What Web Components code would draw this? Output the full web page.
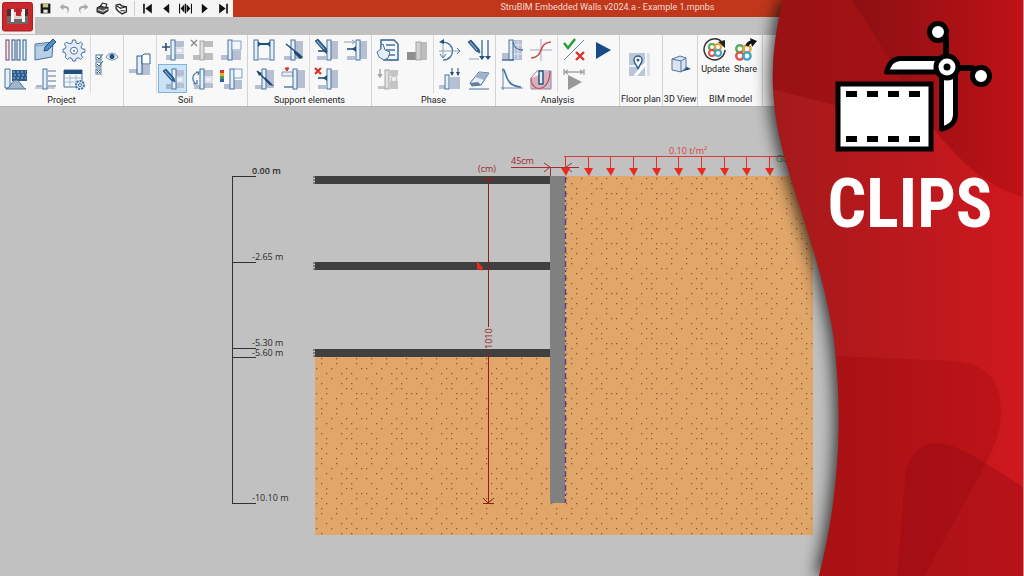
<!DOCTYPE html>
<html lang="en">
<head>
<meta charset="utf-8">
<meta name="viewport" content="width=device-width, initial-scale=1">
<title>StruBIM Embedded Walls v2024.a - Example 1.mpnbs</title>
<style>
  body { margin: 0; font-family: Roboto, "Noto Sans", sans-serif; background: #c1c1c1; }
</style>
</head>
<body>
<clip-page></clip-page>

<script>
/* ---------- icon set, 24 x 24 ---------- */
const pile = (x, y = 2, h = 20) => `<rect x="${x}" y="${y}" width="4" height="${h}" fill="#e6eef7" stroke="#45739d"/>`;
const soil = (x = 14, y = 3) => `<path d="M${x} ${y}h8v18h-8z" fill="#b7bfd2"/>`;
const base = '<path d="M2 17h8v5H2z" fill="#b7bfd2"/>';
const layers = '<path d="M14 3h9v6h-9zM14 16h9v5h-9z" fill="#b7bfd2"/><path d="M15 10h7v5h-7z" fill="#eef2f8" stroke="#c3cbdc"/>';
const pencil = (x, y, c = '#2f6396') => `<path d="M${x} ${y}l3-2 8 9 1 4-4-2z" fill="${c}" stroke="#234f7c" stroke-width=".8"/><path d="M${x + 2} ${y}l7 8" stroke="#a9c6e2"/>`;
const swirl = '<g fill="none" stroke-width="2"><circle cx="9" cy="9" r="3" stroke="#4fae55"/><circle cx="15" cy="9" r="3" stroke="#e9a13b"/><circle cx="9" cy="15" r="3" stroke="#e0514a"/><circle cx="15" cy="15" r="3" stroke="#3fa4c8"/></g>';

const ICONS = {
  walls: '<g fill="#e9eff7" stroke-width="1.2"><rect x="2" y="2" width="3" height="20" stroke="#8e5878"/><rect x="8" y="2" width="3" height="20" stroke="#4a6a94"/><rect x="13" y="2" width="3" height="20" stroke="#4a6a94"/><rect x="19" y="2" width="3" height="20" stroke="#3f78a5"/></g>',
  describe: '<path d="M2 6l18-2-1 15-17 3z" fill="#b9cfe6" stroke="#45739d"/><path d="M2 6l2 2 15-2" fill="none" stroke="#7fa0c0"/><path d="M11 13l1-4 8-8 3 3-8 8z" fill="#4f8dc0" stroke="#234f7c"/>',
  gear: '<path d="M10.500 2h3l.6 3 2 .8 2.500-1.700 2.100 2.100L19 8.700l.8 2 3 .5v3l-3 .6-.8 2 1.700 2.500-2.100 2.100-2.500-1.700-2 .8-.6 2.500h-3l-.6-2.500-2-.8-2.500 1.700-2.100-2.100L4 16.800l-.8-2-2.200-.6v-3l2.200-.5.8-2-1.700-2.500 2.100-2.100L7.900 5.800l2-.8z" fill="#e3ecf6" stroke="#45739d"/><circle cx="12" cy="12.700" r="3.500" fill="#fff" stroke="#45739d"/><circle cx="12" cy="12.700" r="1" fill="#45739d"/>',
  terrain: '<path d="M8 3h15v11H8z" fill="#2d5c8c"/><path d="M9 5h13M10 8h13M9 11h13" stroke="#a3c0dc" stroke-dasharray="2 2"/><path d="M1 2h5v19H1z" fill="#e6eef7" stroke="#45739d"/><path d="M2 22c4-1 6-9 10-9s6 8 10 9z" fill="#a4b4cd" stroke="#45739d"/>',
  strata: '<path d="M15 4h8M15 9h8M15 14h8M15 19h8M3 19h6" stroke="#aab6ca" stroke-width="2"/><path d="M2 21h20" stroke="#c3cbdc" stroke-width="2"/>' + pile(10),
  tableGear: '<path d="M2 3h18v17H2z" fill="#f3f7fb" stroke="#45739d"/><path d="M2 3h18v4H2z" fill="#234f7c"/><path d="M3 11h16M3 15h16M8 8v11M14 8v11" stroke="#a4bad0"/><circle cx="18" cy="18" r="4" fill="#dbe8f5" stroke="#45739d" stroke-width="2" stroke-dasharray="2 1"/><circle cx="18" cy="18" r="1.500" fill="#fff" stroke="#45739d"/>',
  visible: '<g fill="#fff" stroke="#4c7094"><rect x="1" y="3" width="5" height="5"/><rect x="1" y="10" width="5" height="5"/><rect x="1" y="17" width="5" height="5"/></g><path d="M2 5l2 2 4-5M2 12l2 2 4-5M2 18l3 3M5 18l-3 3" fill="none" stroke="#2f5f8f"/><path d="M11 5c3-5 9-5 12 0-3 4-9 4-12 0z" fill="#e3ecf6" stroke="#6f8fae"/><circle cx="17" cy="4.500" r="2.500" fill="#234f7c"/>',
  wallShape: '<path d="M1 17h8v4H1zM14 13h8v10h-8z" fill="#b7bfd2"/><rect x="9" y="4" width="5" height="18" fill="#e6eef7" stroke="#2f5f8f"/><path d="M14 4l2-2h6v10h-8z" fill="#fff" stroke="#2f5f8f"/>',
  addLayer: layers + '<path d="M5 17h5v5H5z" fill="#b7bfd2"/>' + pile(10) + '<path d="M5 5v8M1 9h8" stroke="#234f7c" stroke-width="1.600"/>',
  delLayer: '<path d="M14 3h9v6h-9zM14 15h9v7h-9zM3 17h7v5H3z" fill="#bdbdbd"/><rect x="10" y="3" width="4" height="19" fill="#ddd" stroke="#a5a5a5"/><path d="M1 2l6 6M7 2l-6 6" stroke="#888" stroke-width="1.400"/>',
  areaLayer: '<path d="M2 17h8v5H2zM13 13h9v9h-9z" fill="#b7bfd2"/>' + pile(9) + '<path d="M13 3h9v9h-9z" fill="#f2f6fb" stroke="#7fa0c0"/>',
  editLayer: layers + '<path d="M5 17h5v5H5z" fill="#a4b4cd"/>' + pile(11) + pencil(2, 4),
  swapLayer: layers + '<path d="M4 18h6v4H4z" fill="#b7bfd2"/>' + pile(10) + '<path d="M9 5C2 6 1 13 6 17M6 5l3 0-1 3M3 17h4v-4" fill="none" stroke="#45739d" stroke-width="1.200"/>',
  colorLayer: '<path d="M5 17h6v5H5zM14 13h9v9h-9z" fill="#b7bfd2"/><path d="M1 3h4v4H1z" fill="#d8372e"/><path d="M1 6h4v3H1z" fill="#e5b12c"/><path d="M1 9h4v3H1z" fill="#3ba24b"/><path d="M1 12h4v3H1z" fill="#2a5cc2"/>' + pile(11) + '<path d="M15 2h8v9h-8z" fill="#f2f6fb" stroke="#7fa0c0"/>',
  strut: '<g fill="#e6eef7" stroke="#45739d"><rect x="2" y="2" width="4" height="20"/><rect x="18" y="2" width="4" height="20"/></g><path d="M6 6h12" stroke="#234f7c" stroke-width="2"/><path d="M6 3l3 3-3 3zM18 3l-3 3 3 3z" fill="#234f7c"/><path d="M7 21h10" stroke="#b7bfd2" stroke-width="2"/>',
  anchor: soil() + '<path d="M3 18h7v4H3z" fill="#b7bfd2"/>' + pile(10) + '<path d="M5 6l15 12" stroke="#234f7c" stroke-width="1.600"/><path d="M13 12l9 7-3 2-6-6z" fill="#1c4570"/>',
  anchor2: soil() + '<path d="M3 18h7v4H3z" fill="#b7bfd2"/>' + pile(10) + '<path d="M5 4l14 14" stroke="#234f7c" stroke-width="1.600"/><path d="M5 4l5 2-3 3zM13 10l9 9-4-1-5-5z" fill="#1c4570"/>',
  slab: soil(16) + '<path d="M1 7h11M3 20h9" stroke="#8798b2" stroke-width="2"/><path d="M1 5h11v4H1z" fill="#e6eef7" stroke="#8798b2"/>' + pile(12) + '<path d="M6 0v4M4 1l2 3 2-3z" stroke="#d8372e" fill="#d8372e"/>',
  editSupport: soil(17) + pile(13) + '<path d="M4 13h9" stroke="#234f7c" stroke-width="1.600"/><path d="M13 10v6l-4-3z" fill="#234f7c"/><path d="M3 18h9v4H3z" fill="#b7bfd2"/>' + pencil(1, 3),
  moveSupport: soil(17) + pile(13) + '<path d="M1 4h10M9 2l3 2-3 2" fill="none" stroke="#8da1b8"/><path d="M4 11h9" stroke="#234f7c" stroke-width="1.600"/><path d="M13 8v6l-4-3z" fill="#234f7c"/><path d="M4 18h8v4H4z" fill="#b7bfd2"/>',
  delSupport: soil(17) + pile(13) + '<path d="M4 11h9" stroke="#234f7c" stroke-width="1.600"/><path d="M13 8v6l-4-3z" fill="#234f7c"/><path d="M4 18h8v4H4z" fill="#b7bfd2"/><path d="M1 1l6 6M7 1L1 7" stroke="#df2a22" stroke-width="2"/>',
  phases: '<path d="M5 2h13l4 4v16H8l-3-6z" fill="#f4f7fb" stroke="#2f5f8f" stroke-width="1.400"/><path d="M10 7h9M10 12h9M12 17h7" stroke="#45739d" stroke-width="1.500"/><path d="M1 14l4-3V7l2-1 2 6 5 2-2 6-4 2-5-3z" fill="#e6eef7" stroke="#45739d"/>',
  grayWall: '<path d="M2 14h9v8H2z" fill="#8f8f8f"/><path d="M16 4h6v18h-6z" fill="#bdbdbd"/><rect x="11" y="4" width="5" height="18" fill="#d0d0d0" stroke="#a5a5a5"/>',
  grayLoad: '<path d="M4 2v8M2 7l2 3 2-3" fill="none" stroke="#a5a5a5" stroke-width="1.400"/><path d="M14 3h8v6h-8zM14 14h8v8h-8zM2 19h7v3H2z" fill="#c4c4c4"/><rect x="9" y="3" width="4" height="19" fill="#e0e0e0" stroke="#a5a5a5"/><circle cx="18" cy="12" r="3" fill="#eee" stroke="#bbb"/>',
  moment: '<path d="M3 4C18 3 18 22 5 22" fill="none" stroke="#45739d" stroke-width="1.400"/><path d="M5 3v17M1 13h21" stroke="#8da1b8"/><path d="M1 4l5-3v5z" fill="#234f7c"/><path d="M19 10l3 3-3 3M2 16l3 4 3-4" fill="none" stroke="#45739d"/>',
  editLoad: pencil(1, 4) + '<path d="M15 2v18M21 2v18" stroke="#45739d" stroke-width="1.400"/><path d="M12 18h6l-3 4zM18 18h6l-3 4z" fill="#234f7c"/><path d="M2 21h10" stroke="#8da1b8"/>',
  wallLoads: '<path d="M12 10h10v12H12zM1 18h6v4H1z" fill="#b7bfd2"/><rect x="7" y="8" width="4" height="14" fill="#e6eef7" stroke="#45739d"/><path d="M14 1v7M20 1v7" stroke="#234f7c"/><path d="M12 5h4l-2 4zM18 5h4l-2 4z" fill="#234f7c"/>',
  eraser: '<path d="M3 16l9-11 10 1-8 12-9 1z" fill="#e6eef7" stroke="#45739d"/><path d="M3 16l8-1 3 3-9 1z" fill="#6a7f9a"/><path d="M12 5l10 1-5 7-9-3z" fill="#9db2cb"/><path d="M2 22h20" stroke="#45739d"/>',
  wallGraph: '<path d="M12 2h10v20H12zM2 15h7v7H2z" fill="#b7bfd2"/><path d="M14 3v18M18 3v18M12 7h10M12 16h10" stroke="#e2e7f0"/>' + pile(9) + '<path d="M13 4c1 6 4 8 10 8M2 22h12" fill="none" stroke="#45739d" stroke-width="1.400"/>',
  sCurve: '<path d="M12 1v22M1 12h22" stroke="#9dabbf"/><path d="M2 20c14-1 6-15 20-16" fill="none" stroke="#cf4d4c" stroke-width="1.600"/>',
  decay: '<path d="M3 1v22M1 21h22" stroke="#6c88a8"/><path d="M2 3h2l3 8c2 5 5 8 14 9" fill="none" stroke="#45739d" stroke-width="1.600"/>',
  slip: '<path d="M2 13h8V3h12v19H3z" fill="#bcc4d6"/><path d="M2 11c0 15 19 15 19-7" fill="#d9b0bc" stroke="#bf4955" stroke-width="1.200"/><path d="M2 11L9 3M22 4v18H2V12" fill="none" stroke="#a8798c"/><rect x="10" y="4" width="4" height="13" fill="#e6eef7" stroke="#234f7c" stroke-width="1.400"/>',
  check: '<path d="M2 5l4 5 7-9" fill="none" stroke="#27a03a" stroke-width="2.600"/><path d="M2 22L22 2" stroke="#5d82a7"/><path d="M14 14l8 8M22 14l-8 8" stroke="#e0302a" stroke-width="2.400"/>',
  run: '<path d="M5 4l15 8-15 9z" fill="#174a86"/>',
  runGray: '<path d="M2 2v6M22 2v6M3 5h18M6 3L3 5l3 2M18 3l3 2-3 2" fill="none" stroke="#a5a5a5" stroke-width="1.400"/><path d="M6 8l14 7-14 8z" fill="#989898"/>',
  floor: '<path d="M1 1h16v23H1z" fill="#bcc6d6"/><path d="M19 1h3v23h-3z" fill="#dde2ea"/><path d="M1 14h16" stroke="#eceff4" stroke-width="2"/><path d="M7 24l11-13" stroke="#fff" stroke-width="3"/><path d="M10 17c-1-4-4-5-4-9a4 4 0 0 1 8 0c0 4-3 5-4 9z" fill="#f5f8fc" stroke="#2f5f8f" stroke-width="1.400"/><circle cx="10" cy="8" r="1.500" fill="#2f5f8f"/>',
  cube: '<path d="M12 20l11-3-6-3z" fill="#234f7c"/><path d="M4 7l8-3 6 2v10l-5 4-9-2z" fill="#dbe5f1" stroke="#54779d"/><path d="M4 7l9 2 5-3M13 9v11" fill="none" stroke="#54779d"/>',
  update: '<path d="M19 4a10.500 10.500 0 1 0 3 8" fill="none" stroke="#333" stroke-width="1.500"/><path d="M15 4l7-2v8z" fill="#222"/>' + swirl,
  share: '<g transform="translate(-4 0) scale(1.2)">' + swirl + '</g><path d="M14 8c1-3 3-4 5-4" fill="none" stroke="#111" stroke-width="3"/><path d="M17 0l7 3-5 6z" fill="#111"/>',
  save: '<path d="M3 3h18v18H3z" fill="#16170f"/><path d="M7 3h10v7H7z" fill="#c5c78a"/><path d="M8 14h8v6H8z" fill="#e5e5e5"/>',
  undo: '<path d="M10 3L3 9l7 6V11c7-1 10 3 6 11 8-8 5-16-6-15z" fill="#a9a9a9"/>',
  redo: '<path d="M14 3l7 6-7 6V11c-7-1-10 3-6 11-8-8-5-16 6-15z" fill="#a9a9a9"/>',
  print: '<path d="M2 11l7-4 13 3v6l-9 6-11-4z" fill="#555" stroke="#222" stroke-width="2"/><path d="M8 8l4-6 8 2-2 6z" fill="#f5f5f5" stroke="#222" stroke-width="2"/><path d="M4 14l9 3 8-4" fill="none" stroke="#e5e5e5" stroke-width="2"/>',
  hand: '<path d="M2 6l7-2 3 3 9 2v9l-8 4-8-6-3-4z" fill="#f5f5f5" stroke="#2b2b2b" stroke-width="2.500"/><path d="M9 12l10-3M10 16h8M4 8l7 4" stroke="#2b2b2b" stroke-width="2"/>',
  first: '<path d="M4 3h3v18H4zM20 3v18L8 12z" fill="#111"/>',
  prev: '<path d="M17 3v18L6 12z" fill="#111"/>',
  both: '<path d="M0 3h2v18H0zM22 3h2v18h-2zM10 4v16L3 12zM14 4v16l7-8zM11 3h2v18h-2z" fill="#111"/>',
  next: '<path d="M7 3v18l11-9z" fill="#111"/>',
  last: '<path d="M17 3h3v18h-3zM4 3v18l12-9z" fill="#111"/>'
};

class Element extends HTMLElement {
  connectedCallback() {
    if (this.shadowRoot) return;
    this.attachShadow({ mode: 'open' }).innerHTML = this.render();
  }
}

/* ---------- one ribbon or quick-access button ---------- */
customElements.define('tool-button', class extends Element {
  render() {
    const text = this.getAttribute('text');
    return `<style>
      :host { display: block; }
      button { box-sizing: border-box; display: flex; flex-direction: column; align-items: center; justify-content: center;
        width: 100%; height: 29px; margin: 0; padding: 0; border: 1px solid transparent; background: none; font: inherit; color: inherit; }
      svg { width: 24px; height: 24px; flex: none; display: block; }
      :host([small]) button { height: 16px; border: 0; }
      :host([small]) svg { width: 13px; height: 13px; }
      :host([active]) button { background: #cbe3f6; border-color: #7db4de; }
      :host([text]) button { height: auto; justify-content: flex-start; padding-top: 2px; font-size: 9px; line-height: 15px; }
    </style>
    <button type="button" ${text ? '' : `aria-label="${this.getAttribute('label')}"`}><svg viewBox="0 0 24 24" aria-hidden="true">${ICONS[this.getAttribute('icon')]}</svg>${text || ''}</button>`;
  }
});

/* ---------- a block of buttons inside a ribbon group ---------- */
customElements.define('tool-block', class extends Element {
  render() {
    return `<style>
      :host { display: grid; grid-template-columns: repeat(var(--cols, 1), 29px); grid-auto-rows: 29px; align-content: center;
        justify-content: center; padding: 0 2px 0 1px; }
      :host(:not(:last-child)) { border-right: 1px solid #dadada; }
      :host([wide]) { grid-template-columns: 30px 30px; padding: 0 2px; align-content: start; }
    </style><slot></slot>`;
  }
});

customElements.define('ribbon-group', class extends Element {
  render() {
    return `<style>
      :host { display: flex; flex-direction: column; flex: none; border-right: 1px solid #d2d2d2; color: #222; }
      .tools { display: flex; height: 58px; justify-content: center; }
      h2 { margin: 0; padding: 0 1px; font-size: 9px; line-height: 14px; font-weight: 400; text-align: center; white-space: nowrap; }
    </style>
    <div class="tools"><slot></slot></div><h2>${this.getAttribute('name')}</h2>`;
  }
});

/* ---------- window title row with quick-access buttons ---------- */
customElements.define('title-bar', class extends Element {
  render() {
    const b = (icon, label) => `<tool-button small icon="${icon}" label="${label}"></tool-button>`;
    return `<style>
      :host { display: flex; position: relative; height: 17px; background: #c0371b; }
      .quick { display: flex; flex: none; padding-left: 36px; background: #f5f5f5; }
      .quick tool-button { width: 19px; }
      .rule { width: 1px; margin: 1px 3px; background: #cfcfcf; }
      h1 { flex: 1; margin: 0; padding-right: 42px; text-align: center; font-size: 9px; line-height: 15px; font-weight: 400; color: #f6dcd4; white-space: nowrap; }
      .app { position: absolute; left: 0; top: 0; width: 35px; height: 34px; padding: 0; border: 0; background: none; }
      .app svg { display: block; }
    </style>
    <div class="quick">${b('save', 'Save')}${b('undo', 'Undo')}${b('redo', 'Redo')}${b('print', 'Print')}${b('hand', 'Options')}
      <span class="rule"></span>${b('first', 'First')}${b('prev', 'Previous')}${b('both', 'Choose phase')}${b('next', 'Next')}${b('last', 'Last')}</div>
    <h1>StruBIM Embedded Walls v2024.a - Example 1.mpnbs</h1>
    <button class="app" type="button" aria-label="Application menu"><svg width="35" height="34" viewBox="0 0 35 34">
      <path d="M0 0h35v34H0z" fill="#f7eeee"/><rect x="2.500" y="2.500" width="30" height="28.500" rx="2" fill="#c9292d" stroke="#a91e22"/>
      <path d="M7 9h6v8H7zM22 9h6v8h-6z" fill="#45302f"/><path d="M7 16h21v8H7z" fill="#706766"/>
      <path d="M11 9h3v13h-3zM22 9h3v13h-3z" fill="#f4f4f4"/><path d="M14 12h2v4h5v-4h1v7h-8z" fill="#d8d4d4"/><path d="M16 8h4v7h-4z" fill="#b92327"/>
    </svg></button>`;
  }
});

customElements.define('tool-ribbon', class extends Element {
  render() {
    const group = (name, ...blocks) => `<ribbon-group name="${name}">${blocks.join('')}</ribbon-group>`;
    const block = (cols, ...items) => `<tool-block style="--cols:${cols}">${items.map(i => {
      const [icon, label, active] = i.split('|');
      return `<tool-button icon="${icon}" label="${label}" ${active ? 'active' : ''}></tool-button>`;
    }).join('')}</tool-block>`;
    return `<style>
      :host { display: flex; box-sizing: border-box; height: 72px; background: #f8f8f8; border-bottom: 1px solid #b5b5b5; overflow: hidden; }
    </style>` +
    group('Project',
      block(3, 'walls|Walls', 'describe|Description', 'gear|Settings', 'terrain|Terrain', 'strata|Strata', 'tableGear|Table options'),
      block(1, 'visible|Visible items')) +
    group('Soil',
      block(1, 'wallShape|Wall'),
      block(3, 'addLayer|Add layer', 'delLayer|Delete layer', 'areaLayer|Backfill', 'editLayer|Edit layer|1', 'swapLayer|Swap layer', 'colorLayer|Colours')) +
    group('Support elements',
      block(2, 'strut|Strut', 'anchor|Anchor', 'anchor2|Active anchor', 'slab|Slab'),
      block(2, 'editSupport|Edit', 'moveSupport|Move', 'delSupport|Delete')) +
    group('Phase',
      block(2, 'phases|Phases', 'grayWall|Excavation', 'grayLoad|Backfill phase'),
      block(2, 'moment|Moment', 'editLoad|Edit load', 'wallLoads|Loads', 'eraser|Erase')) +
    group('Analysis',
      block(2, 'wallGraph|Wall results', 'sCurve|Soil behaviour', 'decay|Settlement', 'slip|Slip circle'),
      block(2, 'check|Checks', 'run|Analyse', 'runGray|Analyse steps')) +
    group('Floor plan', block(1, 'floor|Floor plan')) +
    group('3D View', block(1, 'cube|3D View')) +
    group('BIM model', `<tool-block wide><tool-button icon="update" text="Update"></tool-button><tool-button icon="share" text="Share"></tool-button></tool-block>`);
  }
});

/* ---------- section through the wall ---------- */
/* speckles of one 50 x 50 soil tile: row -> columns */
const DOTS = { 3: [9, 24, 44], 8: [9, 24, 44], 13: [4, 19, 34, 49], 18: [14, 29, 39], 23: [4, 19, 34, 44], 28: [9, 29, 39],
  33: [14, 34, 39], 38: [4, 14, 29, 44, 49], 43: [9, 24, 44], 48: [4, 14, 29, 39] };

customElements.define('wall-section', class extends Element {
  render() {
    const dots = Object.entries(DOTS).map(([y, xs]) => xs.map(x => `M${x - 1} ${y}h1.300v1.300h-1.300z`).join('')).join('');
    const slab = y => `<path d="M315 ${y}H550v8H315z"/><path d="M313 ${y + 1}h3M313 ${y + 4}h3M313 ${y + 7}h3" stroke="#404040"/>`;
    const levels = [['0.00 m', 174], ['-2.65 m', 260], ['-5.30 m', 346], ['-5.60 m', 356], ['-10.10 m', 501]];
    let arrows = '';
    for (let i = 0; i < 10; i++) {
      const x = 565 + Math.round(i * 22.67);
      arrows += `<path d="M${x}.500 157v14" stroke="#e0302a"/><path d="M${x - 4} 168h9l-4 8z" fill="#ec2a1c"/>`;
    }
    return `<style>
      :host { display: block; background: #c1c1c1; overflow: hidden; }
      svg { display: block; width: 100%; height: auto; font: 9px "Open Sans", "Noto Sans", sans-serif; }
    </style>
    <svg viewBox="0 107 1024 469" role="img" aria-label="Section of the embedded wall">
      <defs><pattern id="soil" x="313" y="355" width="50" height="50" patternUnits="userSpaceOnUse">
        <rect width="50" height="50" fill="#e0a66a"/><path d="${dots}" fill="#9c5422"/></pattern></defs>
      <path d="M315 357H550V503H565V176H813V535H315z" fill="url(#soil)"/>
      <path d="M232.500 176V504M232 176.500h24M232 262.500h24M232 348.500h24M232 357.500h24M232 503.500h24" stroke="#333" fill="none"/>
      <g fill="#2c2c2c">${levels.map(([t, y], i) => `<text x="252" y="${y}" ${i ? '' : 'font-weight="600"'}>${t}</text>`).join('')}</g>
      <g fill="#404040">${slab(176)}${slab(262)}${slab(349)}</g>
      <path d="M550 176h15v327h-15z" fill="#808080"/>
      <path d="M565.500 177V503" stroke="#5a3c8c" stroke-dasharray="6 3 2 3" stroke-width="1.400"/>
      <g fill="none" stroke="#8e2018"><path d="M488.500 176V327M488.500 351V503M483 178.500h11M483 503.500h11M483 498l5 5 6-5"/>
        <path d="M511 167.500h68M544 163l6 4-6 5M572 163l-6 4 6 5M550.500 168v8" stroke="#a03030"/></g>
      <g fill="#9c2a2c"><text x="478" y="172">(cm)</text><text x="511" y="164">45cm</text>
        <text transform="translate(492 349) rotate(-90)">1010</text></g>
      <path d="M564 156.500H790" stroke="#dc3c38"/>${arrows}
      <text x="669" y="154" fill="#dc3c38">0.10 t/m²</text>
      <text x="776" y="162" fill="#3f8a4a">GL</text>
      <path d="M477 261l6 7-1 3-2-2-3 1z" fill="#ee2a1c"/>
    </svg>`;
  }
});

/* ---------- red side banner ---------- */
customElements.define('clips-banner', class extends Element {
  render() {
    return `<style>
      :host { display: flex; position: relative; flex-direction: column; align-items: center; box-sizing: border-box;
        width: 252px; padding: 18px 0 0 32px; color: #fff; }
      .bg { position: absolute; inset: 0; width: 100%; height: 100%; overflow: visible; }
      .art { position: relative; width: 164px; height: 136px; flex: none; }
      p { position: relative; margin: 8px 0 0; padding-right: 8px; font: 700 68px/84px "Roboto Condensed", "Liberation Sans Narrow", Roboto, sans-serif; }
    </style>
    <svg class="bg" viewBox="772 0 252 576" preserveAspectRatio="none" aria-hidden="true">
      <defs>
        <linearGradient id="g"><stop offset="0" stop-color="#a31a1b"/><stop offset="1" stop-color="#cf181e"/></linearGradient>
        <linearGradient id="d"><stop offset="0" stop-color="#8b1012"/><stop offset="1" stop-color="#bf1117"/></linearGradient>
        <linearGradient id="e"><stop offset="0" stop-color="#a21113"/><stop offset="1" stop-color="#bd1318"/></linearGradient>
        <clipPath id="c"><path d="M783 0C771 50 769 90 780 140C792 192 822 260 834 340C845 430 836 510 819 576H1023V0z"/></clipPath>
        <filter id="s" x="-20%" y="-5%" width="130%" height="110%"><feGaussianBlur stdDeviation="8"/></filter>
      </defs>
      <path d="M783 0C771 50 769 90 780 140C792 192 822 260 834 340C845 430 836 510 819 576H1024V0z" fill="#000" opacity=".75" filter="url(#s)" transform="translate(-4 0)"/>
      <path d="M1020 0h4v576h-4z" fill="#d98a8c"/>
      <g clip-path="url(#c)">
        <path d="M772 0h252v576H772z" fill="url(#g)"/>
        <path d="M772 89L835 105 930 125 930 0H772z" fill="#90090c" opacity=".5"/>
        <path d="M852 0L887 55C905 90 930 127 952 150C980 180 1000 190 1024 197V0z" fill="url(#d)"/>
        <path d="M836 356L955 361C990 364 1002 384 1001 415C1000 450 975 480 925 576H772V356z" fill="url(#e)"/>
        <path d="M1024 488C990 465 955 442 935 443C915 444 906 462 905 480L897 576H1024z" fill="#8c0a10" opacity=".35"/>
      </g>
    </svg>
    <svg class="art" viewBox="832 18 164 136" aria-hidden="true">
      <rect x="838" y="84" width="93" height="65" fill="#fff" stroke="#000" stroke-width="5"/>
      <path d="M846 91h11v6h-11zM867 91h11v6h-11zM888 91h11v6h-11zM909 91h11v6h-11zM846 136h11v6h-11zM867 136h11v6h-11zM888 136h11v6h-11zM909 136h11v6h-11z"/>
      <path d="M938 34L946 38V66M946 68H972L980 74" fill="none" stroke="#000" stroke-width="6"/>
      <g fill="#fff" stroke="#000" stroke-width="5" stroke-linejoin="round">
        <path d="M938 58.500H900C892 59 889 64 886.500 72H940zM941.500 76V129C951 127 955.500 122 955.500 114V76z"/>
        <circle cx="938" cy="32" r="8.500"/><circle cx="981" cy="76" r="8.500"/>
        <circle cx="947" cy="67" r="11"/></g>
      <circle cx="947" cy="67" r="3.500"/>
    </svg>
    <p>CLIPS</p>`;
  }
});

customElements.define('clip-page', class extends Element {
  render() {
    return `<style>
      :host { display: grid; grid-template-columns: minmax(0, 1fr); min-height: 100vh; overflow: hidden; }
      main, clips-banner { grid-area: 1 / 1; }
      main { display: flex; flex-direction: column; }
      tool-ribbon { margin-top: 18px; }
      wall-section { flex: 1; }
      clips-banner { justify-self: end; }
    </style>
    <main><title-bar></title-bar><tool-ribbon></tool-ribbon><wall-section></wall-section></main>
    <clips-banner></clips-banner>`;
  }
});
</script>
</body>
</html>
